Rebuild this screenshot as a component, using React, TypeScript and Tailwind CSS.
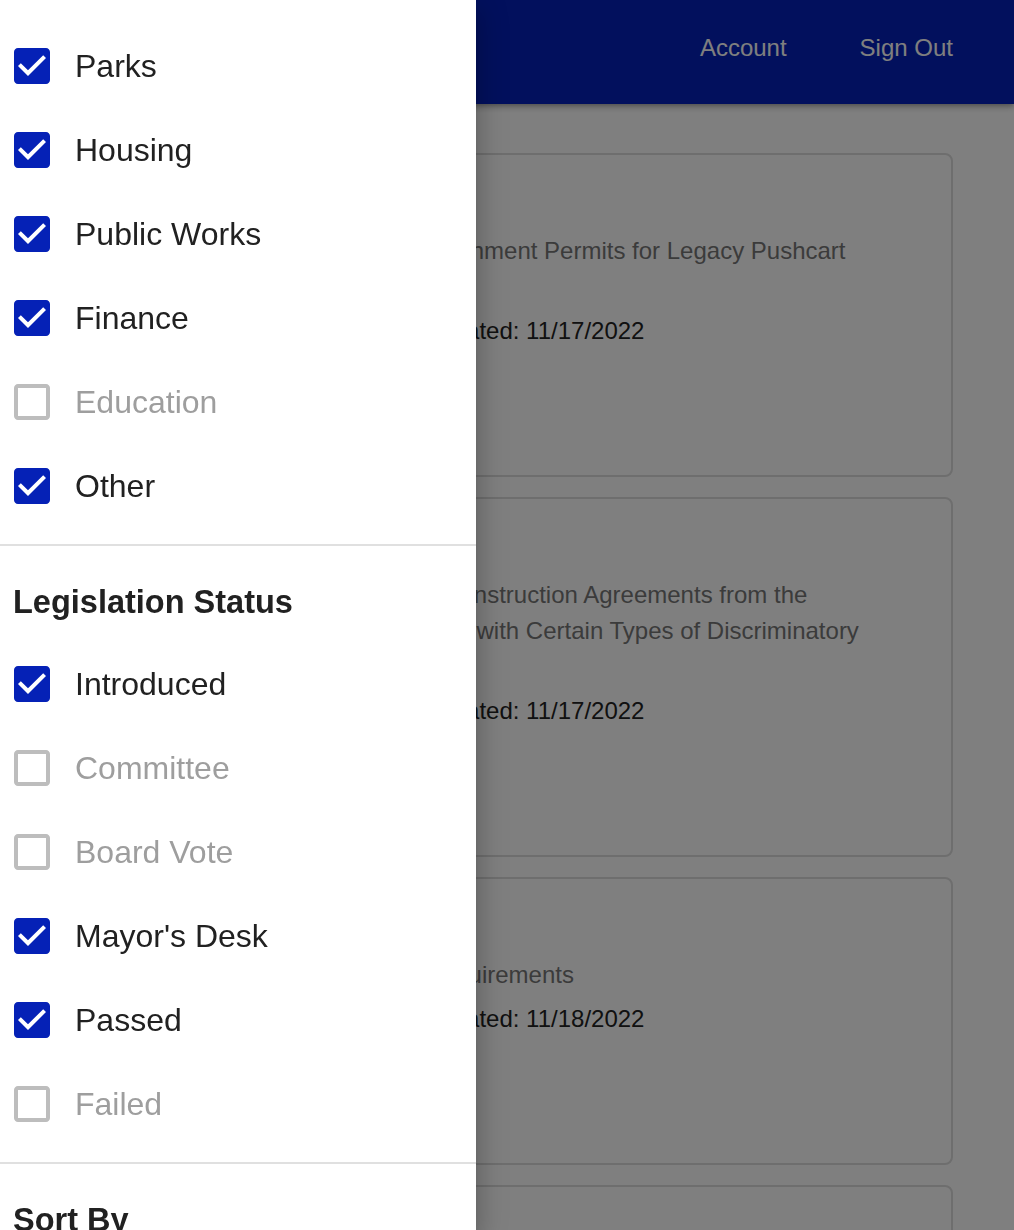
import React from "react";

type Option = { label: string; checked: boolean };

const topics: Option[] = [
  { label: "Parks", checked: true },
  { label: "Housing", checked: true },
  { label: "Public Works", checked: true },
  { label: "Finance", checked: true },
  { label: "Education", checked: false },
  { label: "Other", checked: true },
];

const statuses: Option[] = [
  { label: "Introduced", checked: true },
  { label: "Committee", checked: false },
  { label: "Board Vote", checked: false },
  { label: "Mayor's Desk", checked: true },
  { label: "Passed", checked: true },
  { label: "Failed", checked: false },
];

const bills = [
  {
    file: "File #221161",
    title: "Public Works Code - Street Encroachment Permits for Legacy Pushcart Vendors",
    status: "Status: Introduced",
    updated: "Last Updated: 11/17/2022",
  },
  {
    file: "File #221162",
    title:
      "Administrative Code - Prohibiting Construction Agreements from the Contractors Headquartered in Cities with Certain Types of Discriminatory Policies",
    status: "Status: Committee",
    updated: "Last Updated: 11/17/2022",
  },
  {
    file: "File #221170",
    title: "Planning Code - Home Parking Requirements",
    status: "Status: Passed",
    updated: "Last Updated: 11/18/2022",
  },
  {
    file: "File #221175",
    title: "Health Code - Food Safety Inspection Fees",
    status: "Status: Introduced",
    updated: "Last Updated: 11/18/2022",
  },
];

// MUI-style checkbox glyphs
function CheckIcon({ checked }: { checked: boolean }) {
  if (checked)
    return (
      <svg viewBox="0 0 24 24" className="w-[48px] h-[48px] shrink-0">
        <path
          fill="#0521b6"
          d="M19 3H5c-1.11 0-2 .9-2 2v14c0 1.1.89 2 2 2h14c1.11 0 2-.9 2-2V5c0-1.1-.89-2-2-2zm-9 14l-5-5 1.41-1.41L10 14.17l7.59-7.59L19 8l-9 9z"
        />
      </svg>
    );
  return (
    <svg viewBox="0 0 24 24" className="w-[48px] h-[48px] shrink-0">
      <path
        fill="#bdbdbd"
        d="M19 5v14H5V5h14m0-2H5c-1.1 0-2 .9-2 2v14c0 1.1.9 2 2 2h14c1.1 0 2-.9 2-2V5c0-1.1-.9-2-2-2z"
      />
    </svg>
  );
}

function CheckList({ items }: { items: Option[] }) {
  return (
    <div className="flex flex-col">
      {items.map((it) => (
        <label key={it.label} className="h-[84px] flex items-center pl-[8px]">
          <CheckIcon checked={it.checked} />
          <span
            className={
              "ml-[19px] text-[32px] leading-[40px] " +
              (it.checked ? "text-[#212121]" : "text-[#9e9e9e]")
            }
          >
            {it.label}
          </span>
        </label>
      ))}
    </div>
  );
}

function BillCard({ bill }: { bill: (typeof bills)[number] }) {
  return (
    <div className="border-2 border-[#dcdcdc] rounded-[8px] px-[24px] pt-[24px]">
      <p className="h-[36px] mb-[18px] text-[24px] leading-[36px] font-bold text-[#212121]">
        {bill.file}
      </p>
      <p className="text-[24px] leading-[36px] text-[#777]">{bill.title}</p>
      <div className="mt-[8px] flex text-[24px] leading-[36px] text-[#222]">
        <span className="w-[283px] shrink-0">{bill.status}</span>
        <span>{bill.updated}</span>
      </div>
      <div className="h-[126px] flex items-center gap-4">
        <button className="px-4 py-2 rounded bg-[#0521b6] text-white text-[18px]">View</button>
      </div>
    </div>
  );
}

export default function App() {
  return (
    <div className="min-h-screen bg-white font-['Liberation_Sans',Arial,sans-serif]">
      {/* App bar */}
      <header className="relative z-10 h-[104px] bg-[#0421ba] flex items-center justify-end gap-[73px] pr-[61px] pb-[8px] shadow-[0_2px_4px_-1px_rgba(0,0,0,0.2),0_4px_5px_0_rgba(0,0,0,0.14),0_1px_10px_0_rgba(0,0,0,0.12)]">
        <span className="text-[24px] text-white">Account</span>
        <span className="text-[24px] text-white">Sign Out</span>
      </header>

      {/* Legislation list */}
      <main className="px-[61px] pt-[49px] flex flex-col gap-[20px] pb-10">
        {bills.map((b) => (
          <BillCard key={b.file} bill={b} />
        ))}
      </main>

      {/* Backdrop */}
      <div className="fixed inset-0 z-20 bg-black/50" />

      {/* Filter drawer */}
      <aside className="fixed left-0 top-0 bottom-0 z-30 w-[476px] bg-white overflow-hidden shadow-[0_8px_10px_-5px_rgba(0,0,0,0.2),0_16px_24px_2px_rgba(0,0,0,0.14),0_6px_30px_5px_rgba(0,0,0,0.12)]">
        <div className="pt-[24px]">
          <CheckList items={topics} />
        </div>
        <div className="mt-[16px] border-t-2 border-[#e0e0e0]" />
        <div className="pt-[36px] pb-[20px] pl-[13px]">
          <h2 className="text-[32.5px] leading-[40px] font-bold text-[#212121]">Legislation Status</h2>
        </div>
        <CheckList items={statuses} />
        <div className="mt-[16px] border-t-2 border-[#e0e0e0]" />
        <div className="pt-[36px] pl-[13px]">
          <h2 className="text-[32.5px] leading-[40px] font-bold text-[#212121]">Sort By</h2>
        </div>
      </aside>
    </div>
  );
}
